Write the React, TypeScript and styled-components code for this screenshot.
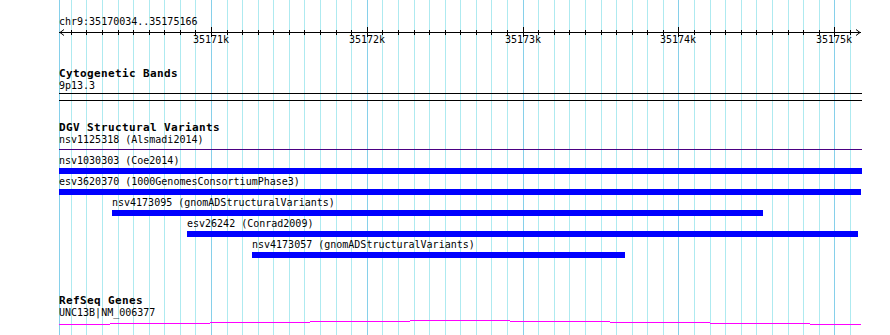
import React from "react";
import styled, { createGlobalStyle } from "styled-components";

const GlobalStyle = createGlobalStyle`
  html, body {
    margin: 0;
    padding: 0;
    background: #fff;
  }
  body {
    font-family: "DejaVu Sans Mono", "Liberation Mono", monospace;
    color: #000;
  }
`;

// view geometry (pixels)
const TRACK_LEFT = 59;
const TRACK_WIDTH = 803;
const KB_X = 211; // x of the 35171k line
const STEP = 15.582; // px per 100 bp

const gridX = (k: number) => Math.round(KB_X + k * STEP);
const ticks = Array.from({ length: 51 }, (_, i) => i - 9);

interface featureProps {
  name: string;
  start: number;
  end: number;
}

const features: featureProps[] = [
  { name: "nsv1030303 (Coe2014)", start: 59, end: 862 },
  { name: "esv3620370 (1000GenomesConsortiumPhase3)", start: 59, end: 861 },
  { name: "nsv4173095 (gnomADStructuralVariants)", start: 112, end: 763 },
  { name: "esv26242 (Conrad2009)", start: 187, end: 858 },
  { name: "nsv4173057 (gnomADStructuralVariants)", start: 252, end: 625 },
];

// stepped rendering of the gene line: [x1, x2, y]
const geneSteps: [number, number, number][] = [
  [59, 110, 324],
  [110, 210, 323],
  [210, 310, 322],
  [310, 410, 321],
  [410, 510, 320],
  [510, 610, 321],
  [610, 710, 322],
  [710, 810, 323],
  [810, 861, 324],
];

const Page = styled.div`
  position: relative;
  width: 890px;
  height: 335px;
  overflow: hidden;
  background: #fff;
`;

const Grid = styled.svg`
  position: absolute;
  left: 0;
  top: 0;
`;

const Tracks = styled.div`
  position: relative;
  display: flex;
  flex-direction: column;
  margin-left: ${TRACK_LEFT}px;
  width: ${TRACK_WIDTH}px;
`;

const Text = styled.div<{ $mt?: number }>`
  font-family: "DejaVu Sans Mono", "Liberation Mono", monospace;
  font-size: 10px;
  line-height: 12px;
  height: 12px;
  white-space: nowrap;
  margin-top: ${(p) => p.$mt ?? 0}px;
`;

const TrackTitle = styled.div<{ $mt: number }>`
  font-family: "DejaVu Sans Mono", "Liberation Mono", monospace;
  font-weight: bold;
  font-size: 11px;
  letter-spacing: 0.38px;
  line-height: 13px;
  height: 13px;
  white-space: nowrap;
  margin-top: ${(p) => p.$mt}px;
`;

const Ruler = styled.div`
  position: relative;
  height: 18px;
`;

const RulerSvg = styled.svg`
  position: absolute;
  left: 0;
  top: 0;
  overflow: visible;
`;

const TickLabel = styled.div`
  position: absolute;
  top: 6px;
  transform: translateX(-50%);
  font-size: 10px;
  line-height: 12px;
  white-space: nowrap;
`;

const BandBox = styled.div`
  margin-top: 1px;
  height: 6px;
  border-top: 1px solid #000;
  border-bottom: 1px solid #000;
`;

const Rule = styled.div<{ $color: string; $mt: number }>`
  margin-top: ${(p) => p.$mt}px;
  height: 1px;
  background: ${(p) => p.$color};
`;

const FeatureList = styled.div`
  display: flex;
  flex-direction: column;
  margin-top: 5px;
`;

const FeatureRow = styled.div`
  display: flex;
  flex-direction: column;
  padding-bottom: 2px;
`;

const Bar = styled.div`
  margin-top: 1px;
  height: 6px;
  background: #0000ff;
`;

const GeneSvg = styled.svg`
  display: block;
`;

export default function App() {
  return (
    <Page>
      <GlobalStyle />
      {/* GRID */}
      <Grid width={890} height={335}>
        <line x1={59.5} x2={59.5} y1={0} y2={335} stroke="#86d0ea" />
        {ticks.map((k) => (
          <line
            key={k}
            x1={gridX(k) + 0.5}
            x2={gridX(k) + 0.5}
            y1={0}
            y2={335}
            stroke={k % 10 === 0 ? "#86d0ea" : "#aeeaf0"}
          />
        ))}
      </Grid>

      <Tracks>
        {/* RULER */}
        <Text $mt={16}>chr9:35170034..35175166</Text>
        <Ruler>
          <RulerSvg width={TRACK_WIDTH} height={18}>
            <line x1={0} x2={802} y1={4.5} y2={4.5} stroke="#000" />
            <polyline points="5,1.5 1,4.5 5,7.5" fill="none" stroke="#000" />
            <polyline points="797,1.5 801,4.5 797,7.5" fill="none" stroke="#000" />
            {ticks.map((k) => {
              const x = gridX(k) - TRACK_LEFT + 0.5;
              const major = k % 10 === 0;
              return (
                <line
                  key={k}
                  x1={x}
                  x2={x}
                  y1={major ? -1 : 2}
                  y2={major ? 9 : 7}
                  stroke="#000"
                />
              );
            })}
          </RulerSvg>
          {[0, 10, 20, 30, 40].map((k, i) => (
            <TickLabel key={k} style={{ left: gridX(k) - TRACK_LEFT }}>
              {35171 + i}k
            </TickLabel>
          ))}
        </Ruler>

        {/* CYTOGENETIC BANDS */}
        <TrackTitle $mt={21}>Cytogenetic Bands</TrackTitle>
        <Text>9p13.3</Text>
        <BandBox />

        {/* DGV */}
        <TrackTitle $mt={20}>DGV Structural Variants</TrackTitle>
        <Text>nsv1125318 (Alsmadi2014)</Text>
        <Rule $color="#4b0082" $mt={3} />
        <FeatureList>
          {features.map((f) => (
            <FeatureRow key={f.name}>
              <Text style={{ marginLeft: f.start - TRACK_LEFT }}>{f.name}</Text>
              <Bar
                style={{ marginLeft: f.start - TRACK_LEFT, width: f.end - f.start }}
              />
            </FeatureRow>
          ))}
        </FeatureList>

        {/* REFSEQ */}
        <TrackTitle $mt={34}>RefSeq Genes</TrackTitle>
        <Text>UNC13B|NM_006377</Text>
        <GeneSvg width={TRACK_WIDTH} height={7}>
          {geneSteps.map(([x1, x2, y]) => (
            <line
              key={x1}
              x1={x1 - TRACK_LEFT}
              x2={x2 - TRACK_LEFT}
              y1={y - 319 + 0.5}
              y2={y - 319 + 0.5}
              stroke="#ff00ff"
            />
          ))}
        </GeneSvg>
      </Tracks>
    </Page>
  );
}
